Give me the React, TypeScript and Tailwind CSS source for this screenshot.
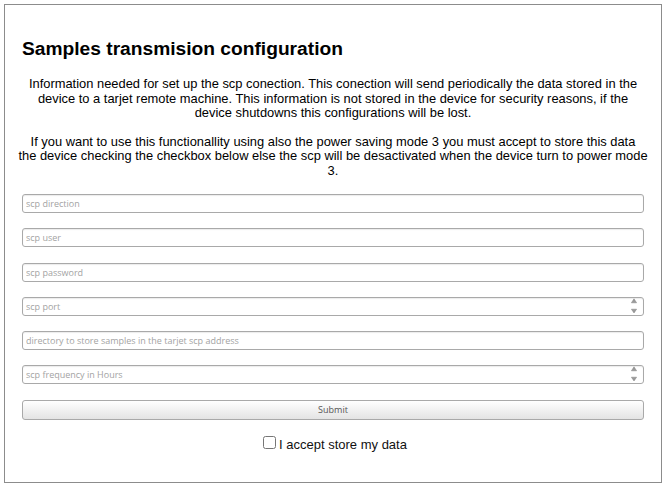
import React from "react";

const fields = [
  { placeholder: "scp direction", spin: false },
  { placeholder: "scp user", spin: false },
  { placeholder: "scp password", spin: false },
  { placeholder: "scp port", spin: true },
  { placeholder: "directory to store samples in the tarjet scp address", spin: false },
  { placeholder: "scp frequency in Hours", spin: true },
];

function Spinner() {
  return (
    <svg className="absolute right-[7px] top-[1px]" width="6" height="16" viewBox="0 0 6 16">
      <path d="M3 0.8 L5.6 4.8 L0.4 4.8 Z" fill="#9a9a9a" stroke="#808080" strokeWidth="0.5" />
      <path d="M0.4 11.2 L5.6 11.2 L3 15 Z" fill="#9a9a9a" stroke="#808080" strokeWidth="0.5" />
    </svg>
  );
}

function Field({ placeholder, spin }: { placeholder: string; spin: boolean }) {
  return (
    <div className="relative h-[19px]">
      <input
        placeholder={placeholder}
        className="block w-full h-full rounded-[3px] border border-[#a9a9a9] bg-white pl-[3px] pr-[4px] text-[9px] text-[#333] placeholder:text-[#a3a3a3] outline-none shadow-[inset_0_1px_1px_rgba(0,0,0,0.08)]"
        style={{ fontFamily: "'Open Sans', sans-serif" }}
      />
      {spin && <Spinner />}
    </div>
  );
}

export default function App() {
  return (
    <div className="w-[666px] h-[493px] bg-white pt-[4px] pl-[4px]" style={{ fontFamily: "'Liberation Sans', Arial, sans-serif" }}>
      <div className="w-[658px] h-[479px] border border-[#8c8c8c] px-[17px] pt-[33px]">
        <h3 className="text-[19.2px] font-bold text-black leading-[22px]">Samples transmision configuration</h3>
        <p className="-mx-[4px] mt-[17px] whitespace-nowrap text-[12.9px] leading-[14.5px] text-center text-black">
          Information needed for set up the scp conection. This conection will send periodically the data stored in the
          <br />
          device to a tarjet remote machine. This information is not stored in the device for security reasons, if the
          <br />
          device shutdowns this configurations will be lost.
        </p>
        <p className="-mx-[4px] mt-[14px] whitespace-nowrap text-[12.9px] leading-[14.5px] text-center text-black">
          If you want to use this functionallity using also the power saving mode 3 you must accept to store this data
          <br />
          the device checking the checkbox below else the scp will be desactivated when the device turn to power mode
          <br />
          3.
        </p>
        <form className="mt-[16px] flex flex-col gap-[15.3px]" onSubmit={(e) => e.preventDefault()}>
          {fields.map((f) => (
            <Field key={f.placeholder} placeholder={f.placeholder} spin={f.spin} />
          ))}
          <button
            type="submit"
            className="h-[20px] w-full rounded-[3px] border border-[#a9a9a9] bg-gradient-to-b from-white to-[#e4e4e4] text-[9px] text-[#555]"
            style={{ fontFamily: "'Open Sans', sans-serif" }}
          >
            Submit
          </button>
        </form>
        <label className="mt-[16px] flex items-end justify-center gap-[3px] pl-[4px] text-[13px] leading-[15px] text-[#111]">
          <input type="checkbox" className="w-[13px] h-[13px] m-0 mb-[3px]" />
          <span>I accept store my data</span>
        </label>
      </div>
    </div>
  );
}
